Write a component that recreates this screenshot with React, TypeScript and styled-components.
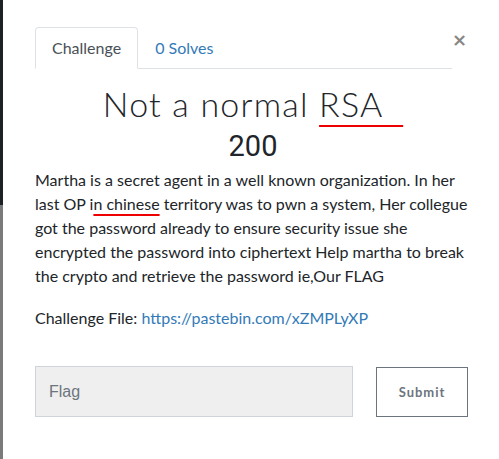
import React from "react";
import styled, { createGlobalStyle } from "styled-components";

const Global = createGlobalStyle`
  html, body { margin: 0; padding: 0; background: #fff; }
  body { font-family: Lato, "Noto Sans", sans-serif; color: #212529; }
  * { box-sizing: border-box; }
`;

const Page = styled.div`
  display: flex;
  width: 499px;
  height: 459px;
  overflow: hidden;
`;

const Edge = styled.div`
  flex: none;
  width: 3px;
  display: flex;
  flex-direction: column;
`;

const EdgePart = styled.div<{ $c: string; $h?: number }>`
  background: ${(p) => p.$c};
  height: ${(p) => (p.$h ? `${p.$h}px` : "auto")};
  flex: ${(p) => (p.$h ? "none" : "1")};
`;

const Modal = styled.div`
  flex: 1;
  min-width: 0;
  padding: 27px 28px 0 32px;
`;

const Header = styled.div`
  display: flex;
  align-items: flex-start;
`;

const Tabs = styled.div`
  display: flex;
  width: 420px;
  border-bottom: 1px solid #dee2e6;
`;

const Tab = styled.div<{ $active?: boolean }>`
  font-size: 16px;
  line-height: 24px;
  padding: 8px 16px;
  border: 1px solid ${(p) => (p.$active ? "#dee2e6" : "transparent")};
  border-radius: 4px 4px 0 0;
  margin-bottom: -1px;
  background: ${(p) => (p.$active ? "#fff" : "transparent")};
  border-bottom-color: ${(p) => (p.$active ? "#fff" : "transparent")};
  color: ${(p) => (p.$active ? "#495057" : "#337ab7")};
`;

const Close = styled.div`
  margin-left: auto;
  margin-top: 4px;
  font-family: "DejaVu Sans", sans-serif;
  font-size: 18px;
  line-height: 18px;
  font-weight: bold;
  color: #878787;
  padding-right: 4px;
`;

const Title = styled.h1`
  margin: 13px 0 0 0;
  text-align: center;
  font-family: Lato, sans-serif;
  font-weight: 300;
  font-size: 34px;
  line-height: 44px;
  letter-spacing: 1.2px;
  color: #212529;
`;

const Squiggle = styled.span`
  text-decoration: underline;
  text-decoration-color: #e00;
  text-decoration-thickness: 2px;
  text-underline-offset: 8px;
  margin-left: -6px;
  padding-left: 6px;
`;

const Points = styled.div`
  margin-top: 3px;
  text-align: center;
  font-family: Roboto, "Liberation Sans", sans-serif;
  font-size: 29px;
  line-height: 34px;
  font-weight: 400;
  color: #212529;
`;

const Desc = styled.p`
  margin: 5px 0 0 0;
  font-size: 16px;
  line-height: 24px;
  color: #212529;
`;

const Word = styled.span`
  text-decoration: underline;
  text-decoration-color: #e00;
  text-decoration-thickness: 2px;
  text-underline-offset: 4px;
`;

const FileLine = styled.p`
  margin: 18px 0 0 0;
  font-size: 16px;
  line-height: 24px;
`;

const Link = styled.a`
  color: #337ab7;
  text-decoration: none;
`;

const Form = styled.div`
  display: flex;
  align-items: center;
  gap: 23px;
  margin-top: 36px;
`;

const Input = styled.div`
  width: 318px;
  height: 51px;
  background: #efefef;
  border: 1px solid #ced4da;
  display: flex;
  align-items: center;
  padding-left: 13px;
  font-family: "Liberation Sans", Arial, sans-serif;
  font-size: 16px;
  color: #6c757d;
`;

const Button = styled.div`
  width: 92px;
  height: 50px;
  border: 1px solid #6c757d;
  display: flex;
  align-items: center;
  justify-content: center;
  font-size: 13px;
  font-weight: 700;
  letter-spacing: 1px;
  color: #6c757d;
`;

export default function App() {
  return (
    <Page>
      <Global />
      <Edge>
        <EdgePart $c="#1d2124" $h={205} />
        <EdgePart $c="#7a7a7a" />
      </Edge>
      <Modal>
        <Header>
          <Tabs>
            <Tab $active>Challenge</Tab>
            <Tab>0 Solves</Tab>
          </Tabs>
          <Close>×</Close>
        </Header>
        <Title>
          Not a normal <Squiggle>RSA&nbsp;&nbsp;</Squiggle>
        </Title>
        <Points>200</Points>
        <Desc>
          Martha is a secret agent in a well known organization. In her last OP i<Word>n chinese</Word> territory was
          to pwn a system, Her collegue got the password already to ensure security issue she encrypted the
          password into ciphertext Help martha to break the crypto and retrieve the password ie,Our FLAG
        </Desc>
        <FileLine>
          Challenge File: <Link href="#">https://pastebin.com/xZMPLyXP</Link>
        </FileLine>
        <Form>
          <Input>Flag</Input>
          <Button>Submit</Button>
        </Form>
      </Modal>
    </Page>
  );
}
